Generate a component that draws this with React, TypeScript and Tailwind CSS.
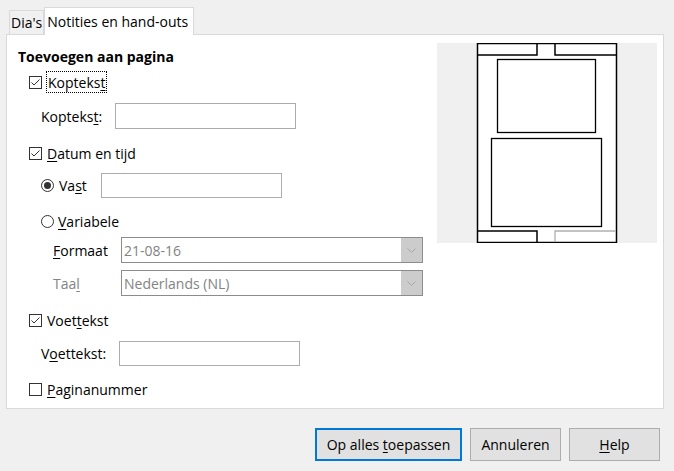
import React from 'react'

const font = { fontFamily: '"Open Sans", "Noto Sans", sans-serif' }

function CheckBox({ checked }: { checked: boolean }) {
  return (
    <svg width="13" height="13" viewBox="0 0 13 13" className="shrink-0">
      <rect x="0.5" y="0.5" width="12" height="12" fill="white" stroke="#333333" />
      {checked && <path d="M2.5 6.5 L5 9 L10.5 3.5" fill="none" stroke="#333333" strokeWidth="1" />}
    </svg>
  )
}

function Radio({ checked }: { checked: boolean }) {
  return (
    <svg width="13" height="13" viewBox="0 0 13 13" className="shrink-0">
      <circle cx="6.5" cy="6.5" r="6" fill="white" stroke="#333333" />
      {checked && <circle cx="6.5" cy="6.5" r="3.5" fill="#333333" />}
    </svg>
  )
}

function Combo({ value }: { value: string }) {
  return (
    <div className="flex h-[26px] w-[302px] border border-[#8c8c8c] bg-white">
      <div className="flex-1 flex items-center pl-[2px] text-[#838383]">{value}</div>
      <div className="w-[21px] bg-[#cccccc] flex items-center justify-center">
        <svg width="9" height="5" viewBox="0 0 9 5">
          <path d="M0.5 0.5 L4.5 4.5 L8.5 0.5" fill="none" stroke="#a6a6a6" />
        </svg>
      </div>
    </div>
  )
}

function Preview() {
  return (
    <svg width="220" height="200" viewBox="0 0 220 200">
      <rect x="0" y="0" width="220" height="200" fill="#f0f0f0" />
      <rect x="40.5" y="0.5" width="139" height="199" fill="white" stroke="black" strokeWidth="1.5" />
      {/* header */}
      <path d="M40.5 12 H100 V0.5" fill="none" stroke="black" strokeWidth="1.5" />
      <path d="M118 0.5 V12 H179.5" fill="none" stroke="black" strokeWidth="1.5" />
      {/* slide */}
      <rect x="60.5" y="16.5" width="98" height="73" fill="white" stroke="black" strokeWidth="1.3" />
      {/* notes */}
      <rect x="54.5" y="95.5" width="110" height="88" fill="white" stroke="black" strokeWidth="1.3" />
      {/* footer */}
      <path d="M40.5 188 H100 V199.5" fill="none" stroke="black" strokeWidth="1.5" />
      <path d="M118 199 V188 H179" fill="none" stroke="#b0b0b0" strokeWidth="1.3" />
    </svg>
  )
}

export default function App() {
  return (
    <div className="w-[674px] h-[471px] bg-[#f0f0f0] text-[14px] text-black overflow-hidden" style={font}>
      {/* Tabs */}
      <div className="flex items-end pl-[9px] pt-[7px] h-[35px]">
        <div className="h-[24px] px-[1px] flex items-center border border-b-0 border-[#d9d9d9] bg-[#f0f0f0] mb-[1px]">
          Dia's
        </div>
        <div className="relative z-10 h-[28px] pl-[2px] pr-[5px] flex items-center border border-b-0 border-[#d9d9d9] bg-white">
          Notities en hand-outs
        </div>
      </div>

      {/* Panel */}
      <div className="ml-[6px] -mt-px w-[658px] h-[375px] border border-[#d9d9d9] bg-white flex">
        <div className="flex-1 flex flex-col">
          <div className="mt-[11px] ml-[11px] h-[20px] flex items-center font-bold">Toevoegen aan pagina</div>

          <div className="mt-[5px] ml-[22px] h-[22px] flex items-center">
            <CheckBox checked />
            <span className="ml-[4px] px-[1px] h-[22px] flex items-center border border-dotted border-black">
              Kopteks<u className="underline-offset-2">t</u>
            </span>
          </div>

          <div className="mt-[10px] ml-[34px] h-[26px] flex items-center">
            <span className="w-[74px]">
              Kopteks<u className="underline-offset-2">t</u>:
            </span>
            <div className="w-[181px] h-[26px] border border-[#acacac]" />
          </div>

          <div className="mt-[13px] ml-[22px] h-[22px] flex items-center">
            <CheckBox checked />
            <span className="ml-[5px]">
              <u className="underline-offset-2">D</u>atum en tijd
            </span>
          </div>

          <div className="mt-[9px] ml-[34px] h-[25px] flex items-center">
            <Radio checked />
            <span className="ml-[5px] w-[42px]">
              Va<u className="underline-offset-2">s</u>t
            </span>
            <div className="w-[181px] h-[25px] border border-[#acacac]" />
          </div>

          <div className="mt-[12px] ml-[34px] h-[22px] flex items-center">
            <Radio checked={false} />
            <span className="ml-[4px]">
              <u className="underline-offset-2">V</u>ariabele
            </span>
          </div>

          <div className="mt-[5px] ml-[46px] h-[26px] flex items-center">
            <span className="w-[68px]">
              <u className="underline-offset-2">F</u>ormaat
            </span>
            <Combo value="21-08-16" />
          </div>

          <div className="mt-[7px] ml-[46px] h-[26px] flex items-center">
            <span className="w-[68px] text-[#838383]">
              Taa<u className="underline-offset-2">l</u>
            </span>
            <Combo value="Nederlands (NL)" />
          </div>

          <div className="mt-[13px] ml-[22px] h-[22px] flex items-center">
            <CheckBox checked />
            <span className="ml-[5px]">
              Voet<u className="underline-offset-2">t</u>ekst
            </span>
          </div>

          <div className="mt-[10px] ml-[34px] h-[25px] flex items-center">
            <span className="w-[78px]">
              V<u className="underline-offset-2">o</u>ettekst:
            </span>
            <div className="w-[181px] h-[25px] border border-[#acacac]" />
          </div>

          <div className="mt-[12px] ml-[22px] h-[22px] flex items-center">
            <CheckBox checked={false} />
            <span className="ml-[5px]">
              <u className="underline-offset-2">P</u>aginanummer
            </span>
          </div>
        </div>

        <div className="pt-[8px] pr-[6px]">
          <Preview />
        </div>
      </div>

      {/* Buttons */}
      <div className="flex justify-end gap-[8px] pr-[14px] mt-[19px]">
        <button className="w-[147px] h-[33px] bg-[#e1e1e1] border-2 border-[#0078d7]">
          Op alles <u className="underline-offset-2">t</u>oepassen
        </button>
        <button className="w-[91px] h-[33px] bg-[#e1e1e1] border border-[#adadad]">Annuleren</button>
        <button className="w-[91px] h-[33px] bg-[#e1e1e1] border border-[#adadad]">
          <u className="underline-offset-2">H</u>elp
        </button>
      </div>
    </div>
  )
}
